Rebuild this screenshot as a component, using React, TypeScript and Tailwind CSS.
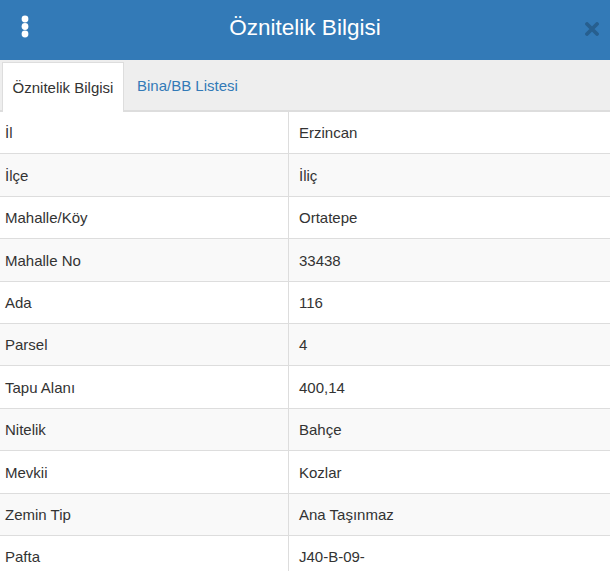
import React from "react";

const rows: [string, string][] = [
  ["İl", "Erzincan"],
  ["İlçe", "İliç"],
  ["Mahalle/Köy", "Ortatepe"],
  ["Mahalle No", "33438"],
  ["Ada", "116"],
  ["Parsel", "4"],
  ["Tapu Alanı", "400,14"],
  ["Nitelik", "Bahçe"],
  ["Mevkii", "Kozlar"],
  ["Zemin Tip", "Ana Taşınmaz"],
  ["Pafta", "J40-B-09-"],
];

export default function App() {
  return (
    <div className="w-[610px] h-[571px] overflow-hidden bg-white font-['Liberation_Sans',Arial,sans-serif] text-[15px] text-[#333]">
      {/* Başlık */}
      <div className="relative flex h-[60px] items-center justify-center bg-[#337ab7]">
        <svg className="absolute left-[21px] top-[15px]" width="8" height="23" viewBox="0 0 8 23">
          <circle cx="4" cy="4" r="3.4" fill="#fff" />
          <circle cx="4" cy="11.5" r="3.4" fill="#fff" />
          <circle cx="4" cy="19" r="3.4" fill="#fff" />
        </svg>
        <h1 className="text-[22.5px] leading-none text-white -mt-[4px]">Öznitelik Bilgisi</h1>
        <svg className="absolute right-[11px] top-[22px]" width="14" height="14" viewBox="0 0 14 14">
          <path d="M2 2 L12 12 M12 2 L2 12" stroke="#275f8f" strokeWidth="3.8" strokeLinecap="round" />
        </svg>
      </div>

      {/* Sekmeler */}
      <div className="flex h-[52px] items-end bg-[#eeeeee] border-b-2 border-[#dddddd] pl-[2px]">
        <div className="-mb-[2px] flex h-[50px] w-[122px] items-center justify-center border border-b-0 border-[#dddddd] bg-white pt-[2px]">
          Öznitelik Bilgisi
        </div>
        <div className="flex h-[50px] items-center px-[13px] pt-[2px] text-[#337ab7]">Bina/BB Listesi</div>
      </div>

      {/* Tablo */}
      <div className="flex flex-col">
        {rows.map(([label, value], i) => (
          <div
            key={label}
            className={`flex h-[42.4px] shrink-0 border-b border-[#dddddd] ${i % 2 === 1 ? "bg-[#f9f9f9]" : "bg-white"}`}
          >
            <div className="flex w-[289px] items-center border-r border-[#dddddd] pl-[5px] pt-[2px]">{label}</div>
            <div className="flex flex-1 items-center pl-[10px] pt-[2px]">{value}</div>
          </div>
        ))}
      </div>
    </div>
  );
}
